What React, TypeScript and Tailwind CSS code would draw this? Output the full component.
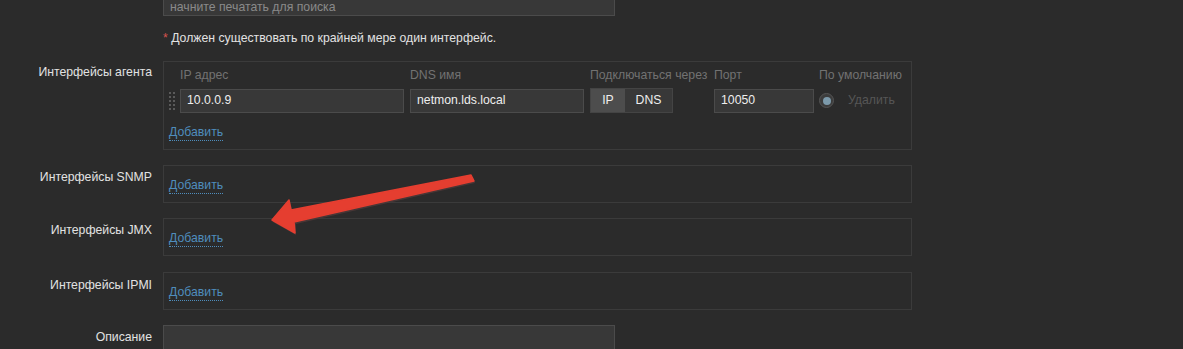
import React from "react";

const Link = () => (
  <span className="inline-block text-[#4f8dbd] leading-[14px] pb-[1px] border-b border-dotted border-[#4f8dbd]">Добавить</span>
);

const Row = ({ label, children, labelPt = "pt-[4px]" }: { label: string; children: React.ReactNode; labelPt?: string }) => (
  <div className="flex">
    <div className={`w-[163px] shrink-0 pr-[11px] text-right text-[#e2e2e2] leading-[14px] ${labelPt}`}>{label}</div>
    {children}
  </div>
);

const SimpleBox = () => (
  <div className="w-[749px] h-[38px] border border-[#3b3b3b] pl-[5px] pt-[10px]">
    <Link />
  </div>
);

export default function App() {
  return (
    <div
      className="relative w-[1183px] h-[349px] overflow-hidden bg-[#2b2b2b] text-[12.25px]"
      style={{ fontFamily: '"Liberation Sans", Arial, sans-serif' }}
    >
      <div className="flex flex-col -mt-[6px]">
        <Row label="" labelPt="">
          <div className="w-[452px] h-[22px] bg-[#383838] border border-[#4b4b4b] pl-[6px] pt-[6px] text-[#8a8a8a] leading-[12px]">
            начните печатать для поиска
          </div>
        </Row>
        <div className="mt-[15px] pl-[163px] leading-[14px] text-[#e2e2e2]">
          <span className="text-[#d9534f]">*</span> Должен существовать по крайней мере один интерфейс.
        </div>
        <div className="mt-[16px]">
          <Row label="Интерфейсы агента">
            <div className="w-[749px] h-[89px] border border-[#3b3b3b] pl-[5px] pt-[6px]">
              <div className="grid grid-cols-[11px_230px_180px_124px_105px_1fr] text-[#727272] leading-[14px]">
                <div />
                <div>IP адрес</div>
                <div>DNS имя</div>
                <div className="whitespace-nowrap">Подключаться через</div>
                <div>Порт</div>
                <div className="whitespace-nowrap">По умолчанию</div>
              </div>
              <div className="grid grid-cols-[11px_230px_180px_124px_105px_1fr] items-center mt-[6px] h-[25px] text-[#eeeeee]">
                <div className="grid grid-cols-[2px_2px] gap-x-[2px] gap-y-[2px] w-[6px]">
                  {Array.from({ length: 10 }).map((_, i) => (
                    <div key={i} className="w-[2px] h-[2px] bg-[#5a5a5a]" />
                  ))}
                </div>
                <div className="w-[224px] h-[24px] bg-[#383838] border border-[#4b4b4b] pl-[6px] flex items-center">10.0.0.9</div>
                <div className="w-[174px] h-[24px] bg-[#383838] border border-[#4b4b4b] pl-[6px] flex items-center">netmon.lds.local</div>
                <div className="w-[83px] h-[25px] flex border border-[#444444]">
                  <div className="w-[34px] bg-[#4d4d4d] flex items-center justify-center">IP</div>
                  <div className="flex-1 bg-[#383838] flex items-center justify-center">DNS</div>
                </div>
                <div className="w-[100px] h-[24px] bg-[#383838] border border-[#4b4b4b] pl-[6px] flex items-center">10050</div>
                <div className="flex items-center">
                  <div className="w-[15px] h-[15px] rounded-full bg-[#3c3c3c] border border-[#555555] flex items-center justify-center">
                    <div className="w-[8px] h-[8px] rounded-full bg-[#7c9aab]" />
                  </div>
                  <span className="ml-[14px] text-[#565656]">Удалить</span>
                </div>
              </div>
              <div className="mt-[10px]">
                <Link />
              </div>
            </div>
          </Row>
        </div>
        <div className="mt-[15px]">
          <Row label="Интерфейсы SNMP" labelPt="pt-[5px]">
            <SimpleBox />
          </Row>
        </div>
        <div className="mt-[15px]">
          <Row label="Интерфейсы JMX" labelPt="pt-[5px]">
            <SimpleBox />
          </Row>
        </div>
        <div className="mt-[16px]">
          <Row label="Интерфейсы IPMI" labelPt="pt-[6px]">
            <SimpleBox />
          </Row>
        </div>
        <div className="mt-[15px]">
          <Row label="Описание" labelPt="pt-[5px]">
            <div className="w-[452px] h-[60px] bg-[#383838] border border-[#4b4b4b]" />
          </Row>
        </div>
      </div>
      <svg className="absolute left-0 top-0 pointer-events-none" width="1183" height="349">
        <polygon
          points="473,177 293,212 290,202 273,222 296,235 296,224 475,183"
          fill="#4d3838"
          opacity="0.85"
        />
        <polygon
          points="471,175 291,210 289,200 272,220 295,233 294,222 474,181"
          fill="#e53e30"
          stroke="#e53e30"
          strokeWidth="1.5"
          strokeLinejoin="round"
        />
      </svg>
    </div>
  );
}
